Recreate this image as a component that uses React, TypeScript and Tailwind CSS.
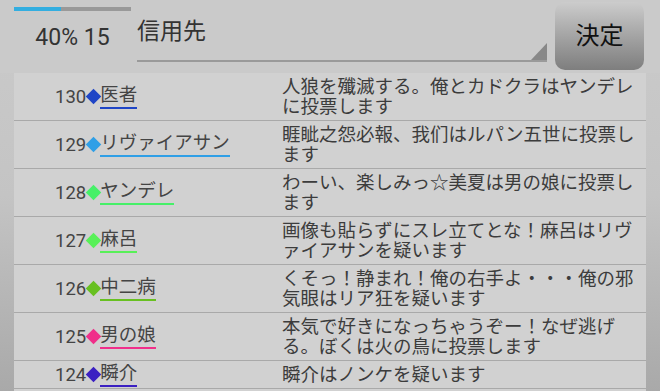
const rows = [
  { no: 130, name: '医者', color: '#1f45c6', msg: '人狼を殲滅する。俺とカドクラはヤンデレに投票します' },
  { no: 129, name: 'リヴァイアサン', color: '#2f9fe6', msg: '睚眦之怨必報、我们はルパン五世に投票します' },
  { no: 128, name: 'ヤンデレ', color: '#46f068', msg: 'わーい、楽しみっ☆美夏は男の娘に投票します' },
  { no: 127, name: '麻呂', color: '#58f058', msg: '画像も貼らずにスレ立てとな！麻呂はリヴァイアサンを疑います' },
  { no: 126, name: '中二病', color: '#68c021', msg: 'くそっ！静まれ！俺の右手よ・・・俺の邪気眼はリア狂を疑います' },
  { no: 125, name: '男の娘', color: '#f02f8a', msg: '本気で好きになっちゃうぞー！なぜ逃げる。ぼくは火の鳥に投票します' },
  { no: 124, name: '瞬介', color: '#3b20c2', msg: '瞬介はノンケを疑います' },
]

const font = { fontFamily: 'Roboto, "Noto Sans CJK JP", sans-serif' }

export default function App() {
  return (
    <div
      className="w-[660px] h-[391px] overflow-hidden bg-gradient-to-b from-[#cbcbcb] via-[#c4c4c4] to-[#a9a9a9]"
      style={font}
    >
      {/* top bar */}
      <div className="flex h-[73px] bg-[#cacaca]">
        <div className="ml-[14px] w-[117px] flex flex-col">
          <div className="mt-[7px] h-[4px] flex bg-[#999999]">
            <div className="w-[47px] bg-[#33aee0]" />
          </div>
          <div className="mt-[12px] text-center text-[23px] leading-[30px] text-[#333333]">40% 15</div>
        </div>
        <div className="ml-[6px] w-[410px] h-[62px] relative border-b-2 border-[#9a9a9a]">
          <div className="pt-[17px] text-[23px] leading-[30px] text-[#333333]">信用先</div>
          <svg className="absolute right-0 bottom-0" width="16" height="17" viewBox="0 0 16 17">
            <polygon points="16,0 16,17 0,17" fill="#888888" />
          </svg>
        </div>
        <button className="ml-[8px] mt-[2px] w-[89px] h-[68px] rounded-[10px] bg-gradient-to-b from-[#cccccc] to-[#7e7e7e] text-[24px] text-[#111111]">
          決定
        </button>
      </div>

      {/* list */}
      <div className="mx-[14px] bg-[#d1d1d1]">
        {rows.map((r) => (
          <div key={r.no} className="flex border-b border-[#a9a9a9] text-[18.5px]">
            <div className="w-[268px] flex items-center pl-[41px] text-[#444444]">
              <span className="leading-[22px]">{r.no}</span>
              <span className="w-[14px] h-[14px] flex items-center justify-center">
                <span className="w-[11px] h-[11px] rotate-45" style={{ background: r.color }} />
              </span>
              <span className="leading-[22px] border-b-2 pb-[1px]" style={{ borderColor: r.color }}>
                {r.name}
              </span>
            </div>
            <div className="w-[360px] py-[3.5px] leading-[20px] text-[#3c3c3c]">{r.msg}</div>
          </div>
        ))}
        <div className="h-[10px]" />
      </div>
    </div>
  )
}
